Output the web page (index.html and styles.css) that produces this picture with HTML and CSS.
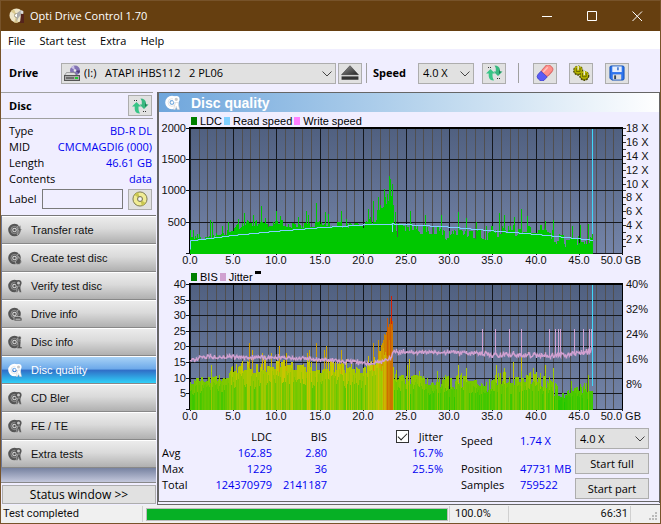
FILE: index.html
```html
<!DOCTYPE html>
<html lang="en">
<head>
<meta charset="utf-8">
<title>Opti Drive Control 1.70</title>
<link rel="stylesheet" href="styles.css">
</head>
<body>
<svg class="defs" aria-hidden="true">
  <defs>
    <linearGradient id="plotBg" x1="0" y1="0" x2="0" y2="1"><stop offset="0" stop-color="#506080"/><stop offset="1" stop-color="#7484a8"/></linearGradient>
    <linearGradient id="ejectFill" x1="0" y1="0" x2="1" y2="1"><stop offset="0" stop-color="#999"/><stop offset="1" stop-color="#222"/></linearGradient>
    <symbol id="disc" viewBox="0 0 14 14">
      <circle cx="6.500" cy="7" r="4.300" fill="none" stroke="currentColor" stroke-width="4"/>
      <circle cx="6.500" cy="7" r="1.200" fill="currentColor"/>
      <circle cx="6.500" cy="7" r="3.600" fill="none" stroke="#ccc" stroke-width=".5"/>
      <path d="M9 4.500l2.500-3" stroke="#ddd" stroke-width=".7"/>
    </symbol>
    <symbol id="lens" viewBox="0 0 14 14">
      <circle cx="10.500" cy="4" r="2.300" fill="#c8c8c8" stroke="currentColor" stroke-width="1.600"/>
      <path d="M9.800 7h2.400l1.300 6.500h-2l-1-3-1 3H8z" fill="currentColor" stroke="#ccc" stroke-width=".5"/>
    </symbol>
    <symbol id="refresh" viewBox="0 0 18 16">
      <path d="M5.500 4L10 8.500H7.500V11q0 2.500 1.500 4.500Q4 15.500 3.700 11V8.500H1z" fill="#38c486"/>
      <path d="M13 11L8.500 6.500h2.300V5Q11 2.500 9.500.5 14.500.5 15 5v1.500H17.500z" fill="#38b880"/>
      <path d="M14 4.500V9l2.500-2.500H15z" fill="#1f7a52"/>
      <path d="M3 2.500h4M12 13.500h3" stroke="#333" stroke-dasharray="1 1"/>
    </symbol>
  </defs>
</svg>

<header class="titlebar">
  <svg class="app-icon" viewBox="0 0 16 16"><circle cx="7.500" cy="7.500" r="7" fill="#eee5c8"/><path d="M7.500 7.500L2 3.500A7 7 0 0 1 5 1zM7.500 7.500L9 14.500a7 7 0 0 1-4 0z" fill="#d9c78c"/><circle cx="7.500" cy="7.500" r="2" fill="#fff" stroke="#a59c80"/><path d="M8 5l4-3 2 3-4 4-3 5 1-6z" fill="#aaa"/><path d="M12 6h3v9h-4z" fill="#55241c"/><circle cx="13" cy="4" r="1.500" fill="#ddd"/></svg>
  <h1>Opti Drive Control 1.70</h1>
  <div class="window-buttons">
    <button aria-label="Minimize"><svg viewBox="0 0 11 11"><path d="M0 5.500h10"/></svg></button>
    <button aria-label="Maximize"><svg viewBox="0 0 11 11"><path d="M.5.5h9v9h-9z"/></svg></button>
    <button aria-label="Close"><svg viewBox="0 0 11 11"><path d="M.5.5l9.500 9.500M10 .5L.5 10"/></svg></button>
  </div>
</header>

<nav class="menubar">
  <a href="#">File</a><a href="#">Start test</a><a href="#">Extra</a><a href="#">Help</a>
</nav>

<div class="toolbar">
  <label class="bold drive-label" for="drive">Drive</label>
  <div class="select drive-select">
    <svg class="drive-icon" viewBox="0 0 16 16"><circle cx="11" cy="5.500" r="5" fill="#8273b4"/><path d="M11 5.500L7 2.500a5 5 0 0 1 3-2z" fill="#c9c0e6"/><path d="M11 5.500l4 3a5 5 0 0 0 1-3z" fill="#4d3f7c"/><circle cx="11" cy="5.500" r="1.300" fill="#eee"/><path d="M2.500 7.500h8l2 3h-12z" fill="#ddd" stroke="#777" stroke-width=".6"/><rect x=".5" y="10.500" width="15" height="5" fill="#aaa" stroke="#555"/><path d="M2 13h8" stroke="#333"/><path d="M11 13h3" stroke="#20c830" stroke-width="2"/></svg>
    <select id="drive"><option>(I:)&nbsp;&nbsp; ATAPI iHBS112&nbsp;&nbsp; 2 PL06</option></select>
    <svg class="chevron" viewBox="0 0 10 6"><path d="M.5.5L5 5 9.500.5"/></svg>
  </div>
  <button class="tool" aria-label="Eject"><svg viewBox="0 0 16 14"><path d="M8 .5L15.500 8.500H.5z" fill="url(#ejectFill)" stroke="#333" stroke-width=".5"/><rect x=".5" y="10" width="15" height="3" fill="#333"/></svg></button>
  <span class="divider"></span>
  <label class="bold speed-label" for="speed">Speed</label>
  <div class="select speed-select">
    <select id="speed"><option>4.0 X</option></select>
    <svg class="chevron" viewBox="0 0 10 6"><path d="M.5.5L5 5 9.500.5"/></svg>
  </div>
  <button class="tool refresh-tool" aria-label="Refresh"><svg><use href="#refresh"/></svg></button>
  <span class="divider wide"></span>
  <div class="tool-group">
    <button class="tool" aria-label="Erase"><svg viewBox="0 0 18 17"><g transform="rotate(42 9 8.500)"><rect x="4.500" y="-1" width="9" height="12" rx="3.500" fill="#ff8f8a" stroke="#d86868"/><path d="M4.500 10h9v4.500a3.500 3.500 0 0 1-3.500 3.500h-2A3.500 3.500 0 0 1 4.500 14.500z" fill="#5b5bf5" stroke="#3b3bc0" stroke-width=".7"/><path d="M7 2v7" stroke="#ffc4c0" stroke-width="1.500"/></g></svg></button>
    <button class="tool" aria-label="Settings"><svg viewBox="0 0 18 17"><g fill="#8f8d00" stroke="#4a4900" stroke-width="1.600" stroke-dasharray="2 1"><circle cx="6" cy="6" r="4.600"/><circle cx="12.500" cy="11.500" r="4.600"/></g><g fill="#bdbb00"><circle cx="6" cy="5" r="4"/><circle cx="12.500" cy="10.500" r="4"/></g><path d="M4 3v4h4V3M10.500 8.500v4h4v-4" stroke="#636200" fill="none"/><path d="M6 1v4M12.500 6.500v4" stroke="#e8e8d0" stroke-width="1.500"/></svg></button>
    <button class="tool" aria-label="Save"><svg viewBox="0 0 18 17"><path d="M1.500 2.500q0-1.500 1.500-1.500h12q1.500 0 1.500 1.500v12q0 1.500-1.500 1.500H3.500l-2-2z" fill="#2e74ed" stroke="#1250b5"/><rect x="4" y="1.500" width="10" height="6" fill="#e6eefc"/><path d="M10 2.500v3" stroke="#2864c8" stroke-width="1.500"/><rect x="4.500" y="10" width="9" height="5.500" fill="#ddd"/><rect x="6" y="11" width="2" height="4" fill="#345"/></svg></button>
  </div>
</div>

<div class="workspace">
  <aside class="sidebar">
    <div class="disc-head"><h2 class="bold">Disc</h2><button class="tool" aria-label="Refresh disc"><svg><use href="#refresh"/></svg></button></div>
    <dl class="disc-info">
      <dt>Type</dt><dd>BD-R DL</dd>
      <dt>MID</dt><dd>CMCMAGDI6 (000)</dd>
      <dt>Length</dt><dd>46.61 GB</dd>
      <dt>Contents</dt><dd>data</dd>
    </dl>
    <div class="label-row">
      <label for="disc-label">Label</label><input id="disc-label" type="text">
      <button class="tool" aria-label="Read label"><svg viewBox="0 0 18 17"><circle cx="9" cy="8.500" r="7.500" fill="#f0ec94" stroke="#77754a"/><path d="M9 8.500L3 4a7.500 7.500 0 0 1 4-2.700zM9 8.500l6 4.500a7.500 7.500 0 0 1-4 2.700z" fill="#c9c650"/><circle cx="9" cy="8.500" r="2.700" fill="#ddd" stroke="#77754a"/><circle cx="9" cy="8.500" r="1" fill="#fff"/></svg></button>
    </div>
    <nav class="tests">
      <a href="#"><svg viewBox="0 0 14 14"><use href="#disc"/><path d="M13 2l-4 5h2l-2 5 5-6h-2z" fill="#555" stroke="#ddd" stroke-width=".4"/></svg>Transfer rate</a>
      <a href="#"><svg viewBox="0 0 14 14"><use href="#disc"/><path d="M10.500 5.500q4 4 2.500 6.500t-5 1q-1.500-2 .5-4 1.500-1 2-3.500z" fill="#555" stroke="#ccc" stroke-width=".6"/></svg>Create test disc</a>
      <a href="#"><svg viewBox="0 0 14 14"><use href="#disc"/><use href="#lens"/></svg>Verify test disc</a>
      <a href="#"><svg viewBox="0 0 14 14"><use href="#disc"/><path d="M6 9.500h6l2 2v2.500H6z" fill="#555" stroke="#ccc" stroke-width=".7"/><path d="M7.500 12.200h5" stroke="#ccc"/></svg>Drive info</a>
      <a href="#"><svg viewBox="0 0 14 14"><use href="#disc"/><path d="M9 6h3.500v6H14v1.500H9V12h1V7.500H9z" fill="#555" stroke="#ccc" stroke-width=".4"/><circle cx="11.500" cy="3" r="1.700" fill="#555" stroke="#ccc" stroke-width=".4"/></svg>Disc info</a>
      <a href="#" class="active"><svg viewBox="0 0 14 14"><use href="#disc"/><use href="#lens"/></svg>Disc quality</a>
      <a href="#"><svg viewBox="0 0 14 14"><use href="#disc"/><use href="#lens"/></svg>CD Bler</a>
      <a href="#"><svg viewBox="0 0 14 14"><use href="#disc"/><use href="#lens"/></svg>FE / TE</a>
      <a href="#"><svg viewBox="0 0 14 14"><use href="#disc"/><use href="#lens"/></svg>Extra tests</a>
    </nav>
    <button class="push status-toggle">Status window &gt;&gt;</button>
  </aside>

  <main class="panel">
    <div class="panel-head"><svg viewBox="0 0 14 14"><use href="#disc"/><use href="#lens"/></svg><h2>Disc quality</h2></div>
    <div class="legend"><i class="ldc"></i>LDC<i class="read"></i>Read speed<i class="write"></i>Write speed</div>
    <svg class="chart" id="ldc-chart" viewBox="0 0 500 142" role="img" aria-label="LDC and read speed"></svg>
    <div class="legend"><i class="ldc"></i>BIS<i class="jitter"></i>Jitter<i class="mark"></i></div>
    <svg class="chart" id="bis-chart" viewBox="0 0 500 142" role="img" aria-label="BIS and jitter"></svg>

    <div class="results">
      <table>
        <thead><tr><td></td><th>LDC</th><th>BIS</th><th><label class="check"><input type="checkbox" checked>Jitter</label></th></tr></thead>
        <tbody>
          <tr><th>Avg</th><td>162.85</td><td>2.80</td><td>16.7%</td></tr>
          <tr><th>Max</th><td>1229</td><td>36</td><td>25.5%</td></tr>
          <tr><th>Total</th><td>124370979</td><td>2141187</td><td></td></tr>
        </tbody>
      </table>
      <dl class="progress-info">
        <dt>Speed</dt><dd>1.74 X</dd>
        <dt>Position</dt><dd>47731 MB</dd>
        <dt>Samples</dt><dd>759522</dd>
      </dl>
      <div class="actions">
        <div class="select"><select aria-label="Test speed"><option>4.0 X</option></select><svg class="chevron" viewBox="0 0 10 6"><path d="M.5.5L5 5 9.500.5"/></svg></div>
        <button class="push">Start full</button>
        <button class="push">Start part</button>
      </div>
    </div>
  </main>
</div>

<footer class="statusbar">
  <span class="state">Test completed</span>
  <progress value="100" max="100" aria-label="Test progress"></progress>
  <span class="percent">100.0%</span>
  <span class="time">66:31</span>
  <svg class="grip" viewBox="0 0 9 9"><path d="M6 0h2v2H6zM6 3h2v2H6zM3 3h2v2H3zM0 6h2v2H0zM3 6h2v2H3zM6 6h2v2H6z" fill="#bbb"/></svg>
</footer>
<script src="charts.js"></script>
</body>
</html>
```
FILE: styles.css
```css
* { box-sizing: border-box; }
body {
  margin: 0; min-height: 100vh; display: flex; flex-direction: column;
  border: 1px solid #77532a;
  background: #f0eeff; color: #000;
  font: 11px/16px "Open Sans", "Noto Sans", sans-serif;
}
h1, h2, dl, dd { margin: 0; font-weight: 400; font-size: inherit; }
a { color: inherit; text-decoration: none; }
button, select, input { font: inherit; color: inherit; margin: 0; }
.defs { position: absolute; width: 0; height: 0; }
.bold { font-weight: 700; }

.titlebar { display: flex; align-items: center; height: 30px; padding-left: 8px; background: #663f10; color: #fff; }
.titlebar h1 { flex: 1; }
.app-icon { width: 16px; height: 16px; margin-right: 5px; }
.window-buttons { display: flex; }
.window-buttons button { width: 45px; height: 30px; padding: 0; border: 0; background: none; }
.window-buttons svg { width: 11px; height: 11px; display: block; margin: 0 auto; fill: none; stroke: #fff; }

.menubar { display: flex; gap: 14px; height: 18px; align-items: center; padding: 2px 0 0 7px; background: #fff; }

.toolbar { display: flex; align-items: center; height: 43px; padding: 9px 31px 4px 8px; }
.drive-label { width: 52px; }
.select { position: relative; height: 21px; }
.select select { width: 100%; height: 100%; appearance: none; border: 1px solid #adadad; border-radius: 0; background: #e1e1e1; padding: 0 4px; }
.chevron { position: absolute; right: 4px; top: 8px; width: 10px; height: 6px; fill: none; stroke: #444; pointer-events: none; }
.drive-select { flex: 1; }
.drive-select select { padding-left: 22px; }
.drive-icon { position: absolute; left: 3px; top: 2px; width: 16px; height: 16px; }
.tool { width: 24px; height: 21px; flex: none; display: flex; align-items: center; justify-content: center; padding: 0; border: 1px solid #adadad; background: #e1e1e1; }
.tool svg { width: 18px; height: 16px; flex: none; }
.toolbar > .tool { margin-left: 2px; }
.divider { width: 1px; height: 20px; margin: 0 6px 0 4px; background: #a0a0a0; }
.divider.wide { margin: 0 14px 0 12px; }
.speed-label { width: 45px; }
.speed-select { width: 56px; }
.toolbar > .refresh-tool { margin-left: 8px; }
.tool-group { display: flex; gap: 12px; }

.workspace { flex: 1; display: flex; }
.sidebar { width: 156px; flex: none; display: flex; flex-direction: column; padding-right: 1px; }
.disc-head { display: flex; align-items: center; justify-content: space-between; height: 27px; margin-right: 3px; padding: 0 1px 0 8px; border-top: 1px solid #a0a0a0; border-bottom: 1px solid #a0a0a0; }
.disc-info { display: grid; grid-template-columns: auto auto; padding: 4px 4px 0 8px; }
.disc-info dd { text-align: right; }
dd, tbody td { color: #0000f0; }
.label-row { display: flex; align-items: center; height: 28px; padding: 0 4px 4px 8px; }
.label-row input { flex: 1; min-width: 0; height: 20px; margin: 0 5px; border: 1px solid #7a7a7a; background: #f0eeff; }
.tests { flex: 1; border-top: 1px solid #777; border-bottom: 1px solid #888; background: linear-gradient(#6c7898 250px, #c4c8dc); padding-left: 1px; font: 11px/16px "Liberation Sans", sans-serif; }
.tests a { display: flex; align-items: center; gap: 9px; height: 28px; padding-left: 6px; color: #111; border-top: 1px solid #fff; border-bottom: 1px solid #888; background: linear-gradient(#ececec, #dadada 45%, #b0b0b0); }
.tests svg { width: 14px; height: 14px; color: #555; }
.tests .active { color: #fff; background: linear-gradient(#a8d2f6, #6eaaea 45%, #3070c8 52%, #30d0f8); }
.tests .active svg { color: #fff; }
.push { height: 21px; padding: 0; border: 1px solid #adadad; background: #e1e1e1; text-align: center; }
.status-toggle { margin: 2px 0 1px 1px; height: 19px; font-size: 12px; }

.panel { flex: 1; min-width: 0; border: 1px solid #666; border-left: 2px solid #666; border-bottom: 4px double #666; }
.panel-head { display: flex; align-items: center; gap: 11px; height: 19px; padding-left: 6px; background: linear-gradient(90deg, #6fa6dc, #bcd7ee 55%, #fff); color: #fff; }
.panel-head svg { width: 15px; height: 15px; }
.panel-head h2 { font: bold 14px/18px "Liberation Sans", sans-serif; }
.legend { display: flex; align-items: center; height: 14px; padding: 3px 0 0 32px; font: 11px/12px "Liberation Sans", sans-serif; }
.legend i { width: 6px; height: 8px; margin-right: 3px; }
.legend i:not(:first-child) { margin-left: 2px; }
.ldc { background: #008000; } .read { background: #80d0ff; } .write { background: #ff80ff; } .jitter { background: #d0a0d0; }
.legend .mark { height: 3px; background: #000; align-self: flex-start; }
.chart { display: block; width: 100%; overflow: visible; font: 11px "Liberation Sans", sans-serif; fill: #111; }
.chart rect { shape-rendering: crispEdges; }

.results { display: flex; align-items: flex-start; padding: 4px 10px 0 2px; }
table { width: 282px; border-collapse: collapse; table-layout: fixed; }
th, td { padding: 0; height: 16px; line-height: 16px; font-weight: 400; text-align: right; }
thead th, thead td { height: 17px; }
th:first-child, td:first-child { width: 28px; text-align: left; }
th:nth-child(2) { width: 83px; } th:nth-child(3) { width: 55px; }
tbody th { padding-left: 1px; }
.check { display: flex; align-items: center; justify-content: flex-end; gap: 10px; }
.check input { appearance: none; width: 13px; height: 13px; border: 1px solid #333; background: #fff; display: grid; place-items: center; }
.check input::before { content: ""; width: 8px; height: 4px; border: solid #222; border-width: 0 0 1px 1px; transform: translateY(-1px) rotate(-45deg); }
.progress-info { display: grid; grid-template-columns: 59px 52px; grid-template-rows: 28px 16px 16px; margin-left: 18px; padding-top: 5px; white-space: nowrap; }
.actions { display: flex; flex-direction: column; gap: 4px; width: 74px; margin-left: auto; }

.statusbar { display: flex; align-items: center; height: 18px; padding-left: 2px; background: #f0f0f0; font: 11px/16px "Roboto", sans-serif; color: #111; }
.state { width: 140px; border-right: 1px solid #d0d0d0; }
progress { appearance: none; flex: 1; height: 13px; margin: 0 1px 0 3px; border: 1px solid #bcbcbc; background: #e6e6e6; }
progress::-webkit-progress-bar { background: #e6e6e6; }
progress::-webkit-progress-value { background: #06b025; }
.percent { width: 60px; padding-left: 5px; border-left: 1px solid #d0d0d0; border-right: 1px solid #d0d0d0; }
.time { width: 122px; padding-right: 2px; text-align: right; border-right: 1px solid #d0d0d0; }
.grip { width: 9px; height: 9px; margin: 4px 2px 0 18px; }
```
FILE: charts.js
```js
const LEFT = 31, TOP = 2, WIDTH = 432, HEIGHT = 125, GB = WIDTH / 50, COLUMNS = 403;

// Repeatable noise, so that each drawing of the chart is the same
function noise(seed) {
  let s = seed;
  return () => { s = (s * 1664525 + 1013904223) % 4294967296; return s / 4294967296; };
}
function lerp(points, x, k) {
  let i = 1;
  while (i < points.length - 1 && points[i][0] < x) i++;
  const a = points[i - 1], b = points[i];
  const t = Math.min(1, Math.max(0, (x - a[0]) / (b[0] - a[0])));
  return a[k] + (b[k] - a[k]) * t;
}
function series(envelope, peaks, seed) {
  const rnd = noise(seed), out = [];
  let level = rnd();
  for (let i = 0; i < COLUMNS; i++) {
    const x = i / GB, lo = lerp(envelope, x, 1), hi = lerp(envelope, x, 2);
    if (rnd() < .65) level = rnd();
    out.push(lo + (hi - lo) * level);
  }
  peaks.forEach(([x, v]) => { out[Math.round(x * GB)] = v; });
  return out;
}
const rect = (x, y, w, h, fill) => `<rect x="${x}" y="${y}" width="${w}" height="${h}" fill="${fill}"/>`;
const text = (x, y, s, anchor) => `<text x="${x}" y="${y}" text-anchor="${anchor}">${s}</text>`;

function frame(maxY, stepY) {
  let s = rect(LEFT, TOP, WIDTH, HEIGHT, 'url(#plotBg)');
  for (let g = 1; g < 50; g++) if (g % 5) s += rect(LEFT + Math.round(g * GB), TOP, 1, HEIGHT, '#504f50');
  for (let v = 0; v <= maxY; v += stepY) {
    const y = TOP + HEIGHT - Math.round(v / maxY * HEIGHT);
    s += rect(LEFT - 4, y, WIDTH + 4, 1, '#15181d');
    if (v) s += text(LEFT - 4, y + 4, v, 'end');
  }
  for (let g = 0; g <= 50; g += 5) {
    const x = LEFT + Math.round(g * GB);
    s += rect(x, TOP, 1, HEIGHT + 2, '#15181d');
    s += text(g === 50 ? x + 19 : x, TOP + HEIGHT + 11, g.toFixed(1) + (g === 50 ? ' GB' : ''), g === 50 ? 'end' : 'middle');
  }
  return s + rect(LEFT - 1, TOP - 1, WIDTH + 2, 2, '#000') + rect(LEFT - 1, TOP, 1, HEIGHT, '#000') + rect(LEFT + WIDTH, TOP, 1, HEIGHT, '#000');
}
const endMarker = (h) => rect(LEFT + COLUMNS - 1, TOP + 1, 1, h, '#40d8f8');

function drawLdc() {
  const env = [[0, 220, 330], [2, 200, 290], [3, 250, 330], [5, 280, 400], [6, 420, 530], [11, 420, 530], [12, 390, 470], [15, 410, 510],
    [20, 390, 490], [21, 430, 620], [22, 600, 780], [22.9, 750, 1000], [23.4, 950, 1100], [23.6, 350, 500], [25, 320, 500], [29, 270, 430],
    [29.6, 110, 350], [30.5, 300, 420], [34, 180, 420], [35, 230, 470], [38, 280, 480], [41, 260, 450], [42.5, 120, 330], [43.5, 70, 290], [46.6, 150, 320]];
  const peaks = [[.05, 360], [.4, 360], [1, 310], [2.35, 530], [2.5, 500], [3.7, 430], [4.4, 490], [5.5, 550], [6.25, 640], [7.3, 610], [8.2, 750],
    [8.7, 560], [10, 670], [10.4, 590], [12.5, 580], [13.4, 670], [13.7, 600], [14.6, 800], [15.6, 650], [16, 620], [17.5, 670], [18, 540],
    [20.55, 700], [21.2, 830], [21.8, 895], [22.4, 1020], [22.8, 950], [23, 1229], [23.2, 1180], [23.35, 1100], [23.7, 660], [24, 260],
    [25.5, 670], [27.2, 600], [29, 610], [31, 660], [32, 560], [33.1, 490], [35.8, 640], [36.3, 600], [37.5, 580], [38.35, 700], [39, 590], [41.1, 510], [42, 530], [44.2, 430], [45.1, 440], [46.1, 470]];
  let s = frame(2000, 500);
  series(env, peaks, 17).forEach((v, i) => {
    const h = Math.round(v / 2000 * HEIGHT);
    s += rect(LEFT + i, TOP + HEIGHT - h, 1, h + 1, '#00c800');
  });
  const speed = [[0, 1.8], [5, 2.6], [10, 3.2], [15, 3.7], [20, 4.1], [23.5, 4.25], [30, 3.8], [35, 3.25], [40, 2.75], [46.6, 1.9]];
  let d = '';
  for (let i = 0; i < COLUMNS; i++) {
    const y = TOP + HEIGHT - Math.round(lerp(speed, i / GB, 1) * 6.95) + .5;
    d += (i ? 'V' + y : `M${LEFT + .5} ${y + 9}V${y}`) + 'H' + (LEFT + i + 1);
  }
  s += `<path d="${d}" fill="none" stroke="#80d0ff"/>` + rect(LEFT + 202, 98, 1, 8, '#80d0ff') + endMarker(105);
  for (let v = 1; v <= 18; v++) {
    const y = TOP + HEIGHT - Math.round(v * HEIGHT / 18);
    s += rect(LEFT + WIDTH + 1, y, 3, 1, '#333');
    if (v % 2 === 0) s += text(LEFT + WIDTH + 4, y + 4, v + ' X', 'start');
  }
  document.getElementById('ldc-chart').innerHTML = s;
}

function heat(v) {
  const r = Math.min(205, v * 13), g = v < 15 ? 200 : Math.max(20, 200 - (v - 15) * 8);
  return `rgb(${Math.round(r)},${Math.round(g)},0)`;
}
function drawBis() {
  const env = [[0, 8, 11], [2, 8, 11], [4, 9, 12], [6, 11, 16], [11, 12, 16], [15, 11, 15], [16, 12, 16], [19, 11, 15], [20.5, 11, 15], [21.5, 14, 18],
    [22.5, 17, 24], [23, 25, 28], [23.4, 27, 29], [23.5, 10, 14], [24.2, 7, 11], [26, 8, 13], [28, 7, 11], [30, 6, 11], [33, 7, 12], [34, 4, 9],
    [36, 7, 12], [40, 8, 12], [41.5, 5, 11], [43, 3, 7], [45, 5, 8], [46.6, 5, 9]];
  const peaks = [[2.4, 14], [6.8, 21], [7.2, 19], [8.3, 18], [8.7, 17], [9.4, 18], [10.3, 20], [11.1, 18], [13.5, 18], [13.8, 19], [14.6, 21], [15.5, 19], [15.7, 20],
    [17.5, 19], [18, 16], [20.6, 17], [21.2, 21], [21.8, 22], [22.4, 24], [22.8, 29], [23.1, 29], [23.25, 36], [25.1, 14], [25.4, 16], [28.6, 12], [31, 14],
    [32, 13], [35.4, 14], [36.3, 13], [37.4, 15], [38.35, 17], [39.7, 13], [41.1, 14], [42, 13], [44.1, 9], [46.1, 11]];
  const low = noise(91), j = noise(5);
  let s = frame(40, 5);
  series(env, peaks, 43).forEach((v, i) => {
    const h = Math.round(v / 40 * HEIGHT), inner = v * (.55 + low() * .4), ih = Math.round(inner / 40 * HEIGHT);
    s += rect(LEFT + i, TOP + HEIGHT - h, 1, h + 1, v > 32 ? '#d82000' : heat(v)) + rect(LEFT + i, TOP + HEIGHT - ih, 1, ih + 1, heat(v > 24 ? Math.min(v, 29) - 3 : inner));
  });
  const base = [[0, 15.8], [2, 16.7], [5, 16.7], [12, 16.3], [16, 15.8], [18, 15.2], [21, 14.5], [22, 15.2], [23.3, 16.6], [23.45, 18.1], [33.5, 17.9], [35, 17.3], [43, 17.2], [46, 18.2], [46.6, 20]];
  const spikes = [33.85, 35.25, 36.9, 38.3, 41.6, 42.2, 42.65, 42.85, 44.4, 45.45, 46.15, 46.4].map(x => Math.round(x * GB));
  let d = '', bars = '';
  for (let i = 0; i < COLUMNS - 1; i++) {
    const x = i / GB, amp = x > 34 ? 1.6 : 1.1;
    const v = lerp(base, x, 1), y = TOP + HEIGHT - (v + (j() - .5) * amp) / 40 * HEIGHT;
    const y2 = y + (j() - .5) * 4;
    if (spikes.includes(i)) bars += rect(LEFT + i, 47, 1, Math.round(y) - 47, '#d0a0d0');
    d += `${i ? 'L' : 'M'}${LEFT + i + .5} ${y.toFixed(1)}V${y2.toFixed(1)}V${y.toFixed(1)}`;
  }
  s += bars + `<path d="${d}" fill="none" stroke="#d0a0d0" stroke-width="1.500"/>` + endMarker(101);
  for (let v = 8; v <= 40; v += 8) {
    const y = TOP + HEIGHT - Math.round(v / 40 * HEIGHT);
    s += text(LEFT + WIDTH + 4, y + 4, v + '%', 'start');
  }
  document.getElementById('bis-chart').innerHTML = s;
}
drawLdc();
drawBis();
```
